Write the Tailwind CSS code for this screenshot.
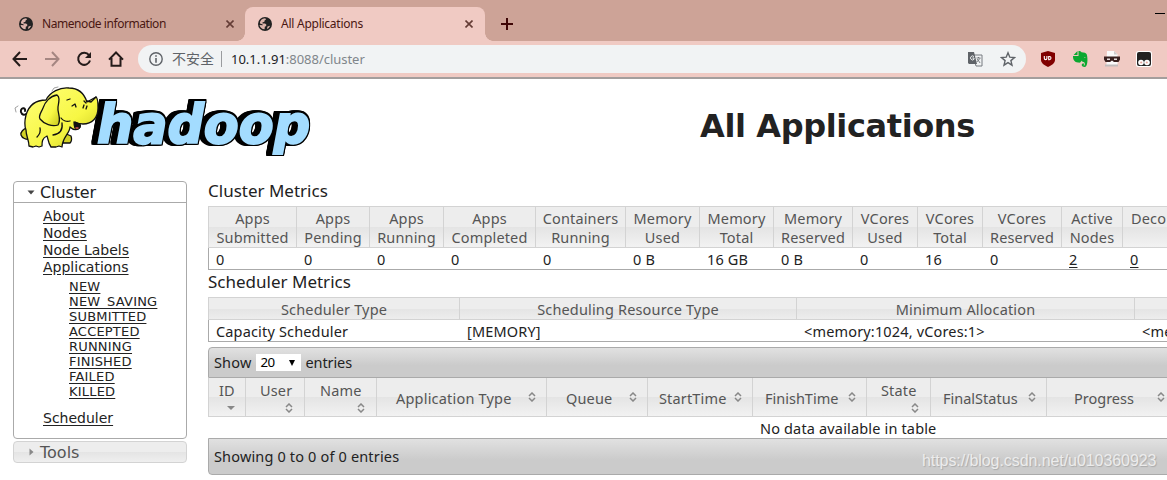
<!DOCTYPE html>
<html lang="zh">
<head>
<meta charset="utf-8">
<title>All Applications</title>
<script src="https://cdn.jsdelivr.net/npm/@tailwindcss/browser@4"></script>
</head>
<body class="w-[1167px] h-[480px] overflow-hidden bg-white font-['Noto_Sans','Noto_Sans_CJK_SC',sans-serif] text-[#222]">
<svg class="hidden">
  <symbol id="globe" viewBox="0 0 14 14"><circle cx="7" cy="7" r="7" fill="#222"/><path d="M7.2 1.2 8 2.6 6.6 3.5 6.4 4.8 4.4 5.6 4.6 6.5 7 6.4 8.3 7.6 8.2 9 6.8 9.8 6.6 12.3C4 12.3 2 10.5 1.5 8L4.8 8.2 4.4 7.2 2 6.6C1.8 3.6 4 1.3 7.2 1.2Z" fill="#dcb4ab"/><path d="M9.5 9.5 12 8.8C11.6 10.4 10.4 11.6 9 12Z" fill="#dcb4ab"/></symbol>
  <symbol id="close" viewBox="0 0 8 8"><path d="M.5.5l7 7M7.5.5l-7 7" stroke="#643c35" stroke-width="1.6"/></symbol>
  <symbol id="sort" viewBox="0 0 8 10"><path d="M1 4 4 1 7 4M1 6 4 9 7 6" fill="none" stroke="#888" stroke-width="1.5"/></symbol>
</svg>

<!-- Tab strip -->
<div class="flex h-[41px] bg-[#cda397] text-[12px] text-[#4a1712]">
  <div class="flex w-[245px] h-[41px] pt-[7px] pl-[19px]">
    <div class="flex items-center w-full h-[34px]"><svg class="w-[14px] h-[14px]"><use href="#globe"/></svg><span class="ml-[9px] w-[184px] whitespace-nowrap tracking-[-0.44px]">Namenode information</span><svg class="w-2 h-2"><use href="#close"/></svg></div>
  </div>
  <div class="relative flex items-center w-[240px] h-[34px] mt-[7px] pl-[13px] bg-[#f0cac3] rounded-t-[8px]">
    <div class="absolute -left-2 bottom-0 size-2 bg-[radial-gradient(circle_at_0_0,#cda397_7.5px,#f0cac3_8px)]"></div>
    <div class="absolute -right-2 bottom-0 size-2 bg-[radial-gradient(circle_at_100%_0,#cda397_7.5px,#f0cac3_8px)]"></div>
    <svg class="w-[14px] h-[14px]"><use href="#globe"/></svg><span class="ml-[9px] w-[184px] whitespace-nowrap tracking-[-0.25px]">All Applications</span><svg class="w-2 h-2"><use href="#close"/></svg>
  </div>
  <svg class="ml-4 mt-[18px] w-3 h-3" viewBox="0 0 12 12"><path d="M6 0v12M0 6h12" stroke="#3e0505" stroke-width="2"/></svg>
  <div class="ml-auto mr-[2px] mt-[13px] w-[10px] h-px bg-black"></div>
</div>

<!-- Toolbar -->
<div class="flex items-center h-[38px] bg-[#f0cac3] border-b-2 border-[#a49e9d]">
  <svg class="ml-[12px] w-4 h-4" viewBox="0 0 16 16" fill="none" stroke="#241b1a" stroke-width="2"><path d="M8 1 1.500 8 8 15M1.500 8H15"/></svg>
  <svg class="ml-4 w-4 h-4" viewBox="0 0 16 16" fill="none" stroke="#a58682" stroke-width="2"><path d="M8 1 14.500 8 8 15M14.500 8H1"/></svg>
  <svg class="ml-4 w-4 h-4" viewBox="0 0 16 16"><path d="M13 4.200A6 6 0 1 0 14 9.500" fill="none" stroke="#241b1a" stroke-width="2"/><path d="M15 1v6H9Z" fill="#241b1a"/></svg>
  <svg class="ml-4 w-4 h-4" viewBox="0 0 16 16"><path d="M1 8.600 8 1.500l7 7.100M3.500 7v7.800h9V7" fill="none" stroke="#241b1a" stroke-width="2"/></svg>
  <div class="flex items-center ml-[14px] w-[888px] h-7 rounded-full bg-[#f1f3f4] pl-[11px] pr-[10px]">
    <svg class="w-[14px] h-[14px]" viewBox="0 0 14 14"><circle cx="7" cy="7" r="6.200" fill="none" stroke="#5f6368" stroke-width="1.400"/><path d="M7 3.200v1.600M7 6v4.800" stroke="#5f6368" stroke-width="1.600"/></svg>
    <span class="ml-[9px] w-[49px] text-[14px] leading-7 text-[#5f6368] whitespace-nowrap">不安全</span>
    <span class="w-px h-4 bg-[#9a9c9f]"></span>
    <span class="ml-[9px] text-[13px] tracking-[-0.03px] leading-7 text-[#80868b] whitespace-nowrap"><span class="text-[#202124]">10.1.1.91</span>:8088/cluster</span>
    <svg class="ml-auto w-[15px] h-[15px]" viewBox="0 0 15 15"><path d="M5 3h9v11H8z" fill="#f1f3f4" stroke="#777b80"/><path d="M0 0h6l3 12H1L0 11Z" fill="#5f6368"/><path d="M6 4.600A2 2 0 1 0 6 7.300V6H4.300" fill="none" stroke="#f1f3f4"/><path d="M8.500 6h4M10.500 5v1M12 6.400 8.800 10M9.300 7l2.800 4" fill="none" stroke="#6a6e73" stroke-width=".9"/></svg>
    <svg class="ml-[17px] w-4 h-4" viewBox="0 0 16 16"><path d="m8 1.800 1.800 4.400 4.600.4-3.500 3 1.100 4.600L8 11.700l-4 2.500 1.100-4.600-3.500-3 4.600-.4Z" fill="none" stroke="#5f6368" stroke-width="1.400"/></svg>
  </div>
  <svg class="ml-[15px] w-[14px] h-4" viewBox="0 0 14 16"><path d="M7 0 14 2v7c0 3-3 5-7 7C3 14 0 12 0 9V2Z" fill="#800000"/><path d="M3.300 5v2.300a1.300 1.300 0 0 0 2.600 0V5M7.700 5.500h.7a1.600 1.600 0 0 1 0 3.200h-.7Z" fill="none" stroke="#fff" stroke-width="1.100"/></svg>
  <svg class="ml-[18px] w-[15px] h-4" viewBox="0 0 15 16"><path d="M4.500 0v4H.6ZM5.500 0C7 0 8 .5 8.500 1.300 11 1.500 13.300 1.800 13.800 3.500 15 8 14.800 16 11.500 16 8.500 16 8 13.300 9.800 12.600L11.300 12.600V13.800C10.300 13.600 10.200 14.500 11.200 14.500 12.500 14.500 12.300 11.500 10.500 11 9.500 10.800 8.700 10.500 8.300 9.500 7.800 11.500 7 12 5 11.600 1.500 11 0 9 0 5h5.500Z" fill="#0ba830"/><path d="M10.800 6.800q1-1.400 2 .2Z" fill="#f0cac3"/></svg>
  <svg class="ml-[16px] w-4 h-4" viewBox="0 0 16 16"><path d="M3 0h7l3.500 3.500V14H2.500Z" fill="#fafafa"/><path d="M10 0v3.500h3.500Z" fill="#ccc"/><path d="M1 13.500h13v2H1Z" fill="#c0bcbc"/><path d="M0 5.500h16v3L14.500 11H10L8 9.500 6 11H1.500L0 8.500Z" fill="#39201f"/><path d="M3 8.300h3M10 8.300h3" stroke="#e5dcdc" stroke-width="1.400"/></svg>
  <svg class="ml-4 w-4 h-4" viewBox="0 0 16 16"><rect width="16" height="16" rx="2.500" fill="#fff"/><rect x="1" y="1" width="14" height="14" rx="2" fill="#222"/><circle cx="5" cy="11.500" r="2.800" fill="#fff"/><circle cx="11" cy="11.500" r="2.800" fill="#fff"/><circle cx="5.200" cy="11.500" r="1.100" fill="#e7a79e"/><circle cx="10.800" cy="11.500" r="1.100" fill="#e7a79e"/></svg>
</div>

<!-- Page banner -->
<header class="flex h-[102px]">
  <svg class="w-[330px] h-[90px] -mt-px shrink-0" viewBox="0 0 330 90">
    <defs><linearGradient id="skin" x1="0" y1="0" x2="1" y2="1"><stop offset="0" stop-color="#ffff7a"/><stop offset=".6" stop-color="#f7f744"/><stop offset="1" stop-color="#c5c51c"/></linearGradient></defs>
    <text x="97" y="65" font-family="DejaVu Sans" font-weight="bold" font-style="italic" font-size="53" textLength="213" lengthAdjust="spacingAndGlyphs" fill="#a3dcff" stroke="#a3dcff" stroke-width="2" stroke-linejoin="miter" class="[filter:drop-shadow(1.5px_0_0_#000)_drop-shadow(-1.5px_0_0_#000)_drop-shadow(0_1.5px_0_#000)_drop-shadow(0_-1.5px_0_#000)_drop-shadow(-4px_0_0_#000)]">hadoop</text>
    <g stroke="#111" stroke-width="1.300" stroke-linejoin="round" stroke-linecap="round">
      <path d="M26 36c-3 2-6-1-5-4s5-2 4 1" fill="none" stroke-width="2"/>
      <path d="M26 50c-2 1-6 4-5 7s5 5 9 4ZM64 55l7 3c1 3 0 6-1 7h-7Z" fill="#d2d226"/>
      <path d="M26 37C29 27 36 22 46 22 50 14 60 9 69 10 78 10 84 15 87 24L96 19C98 20 98 25 98 30 98 40 92 46 83 46 79 46 77 45 75 44L80 49C78 53 73 52 70 49 70 55 62 60 62 69L59 68 56 69 51 69C48 65 48 60 47 58 42 60 42 64 42 68L39 69 36 68 33 69 29 68C29 62 26 58 26 52 24 47 25 41 26 37Z" fill="url(#skin)"/>
      <path d="M57 17C50 18 45 24 43 30 41 35 38 38 40 41 44 46 52 49 58 47 62 41 57 35 58 29 59 23 60 19 57 17Z" fill="url(#skin)"/>
      <path d="M74 44C74 47 74 51 77 51 80 51 81 48 80 46Z" fill="#111"/><path d="M76 50h2" stroke="#d55"/>
      <path d="M72 28l3-2 1 3M67 22l3-1M83 30l1-3M86 31l1-3M86 25l-2-2M96 19l-5 5-4-1M61 40c2 3 6 4 9 3M62 45c1 7-2 11-9 12M40 50c1 4-1 7-3 9" fill="none"/>
      <path d="M52 13l2-3 4-1M16 34l-1-4 3-2" fill="none" stroke="#888" stroke-width=".8"/>
    </g>
  </svg>
  <h1 class="ml-[370px] mt-[27px] leading-[40px] text-[32px] tracking-[-0.38px] font-bold font-['DejaVu_Sans',sans-serif] whitespace-nowrap">All Applications</h1>
</header>

<main class="flex items-start w-[1167px] overflow-hidden pl-[13px]">
  <!-- Navigation -->
  <nav class="w-[174px] shrink-0 font-['DejaVu_Sans',sans-serif]">
    <div class="h-[258px] border border-[#aaa] rounded-[4px]">
      <div class="flex items-center h-[21px] border-b border-[#aaa] pl-[13px] text-[16px] tracking-[-0.1px] leading-[20px]"><svg class="w-2 h-[5px]" viewBox="0 0 8 5"><path d="M.5.500h7L4 4.500Z" fill="#444"/></svg><span class="ml-[5px] pt-px">Cluster</span></div>
      <div class="pt-[5px] pl-[29px] text-[14px] tracking-[0] leading-[17px] underline underline-offset-2">
        <div>About</div><div>Nodes</div><div>Node Labels</div><div>Applications</div>
        <div class="pt-[3px] pl-[26px] text-[13px] tracking-[0.2px] leading-[15px]"><div>NEW</div><div>NEW_SAVING</div><div>SUBMITTED</div><div>ACCEPTED</div><div>RUNNING</div><div>FINISHED</div><div>FAILED</div><div>KILLED</div></div>
        <div class="mt-[11px]">Scheduler</div>
      </div>
    </div>
    <div class="mt-[2px] flex items-center h-[22px] border border-[#d3d3d3] rounded-[4px] pl-[15px] text-[16px] text-[#555] bg-[linear-gradient(#ededed_50%,#e4e4e4_50%,#efefef)]"><svg class="w-[5px] h-2" viewBox="0 0 5 8"><path d="M.5.500v7L4.500 4Z" fill="#888"/></svg><span class="ml-[6px] pt-px">Tools</span></div>
  </nav>

  <section class="ml-[21px] w-[959px] overflow-hidden shrink-0 text-[14.500px] tracking-[0.16px] whitespace-nowrap">
    <h2 class="h-[25px] leading-[20px] text-[17px] tracking-[0]">Cluster Metrics</h2>
    <div class="grid grid-cols-[88px_73px_74px_92px_90px_74px_74px_79px_65px_65px_79px_61px_200px] h-[42px] border-y border-[#d3d3d3] bg-[linear-gradient(#ededed_50%,#e4e4e4_50%,#f2f2f2)] text-center leading-[19px] pt-0 text-[#555] *:border-l *:border-[#d3d3d3] *:pt-[2px]">
      <div>Apps<br>Submitted</div><div>Apps<br>Pending</div><div>Apps<br>Running</div><div>Apps<br>Completed</div><div>Containers<br>Running</div><div>Memory<br>Used</div><div>Memory<br>Total</div><div>Memory<br>Reserved</div><div>VCores<br>Used</div><div>VCores<br>Total</div><div>VCores<br>Reserved</div><div>Active<br>Nodes</div><div class="text-left pl-[8px]">Deco</div>
    </div>
    <div class="grid grid-cols-[88px_73px_74px_92px_90px_74px_74px_79px_65px_65px_79px_61px_200px] h-[22px] border-b border-l border-[#aaa] leading-[22px] *:pl-[7px]">
      <div>0</div><div>0</div><div>0</div><div>0</div><div>0</div><div>0 B</div><div>16 GB</div><div>0 B</div><div>0</div><div>16</div><div>0</div><div class="underline underline-offset-2">2</div><div class="underline underline-offset-2">0</div>
    </div>
    <h2 class="h-[27px] leading-[24px] text-[17px] tracking-[0]">Scheduler Metrics</h2>
    <div class="grid grid-cols-[251px_337px_338px_338px] h-[23px] border-y border-[#d3d3d3] bg-[linear-gradient(#ededed_50%,#e4e4e4_50%,#ededed)] text-center leading-[23px] text-[#555] *:border-l *:border-[#d3d3d3] *:h-[21px]">
      <div>Scheduler Type</div><div>Scheduling Resource Type</div><div>Minimum Allocation</div><div></div>
    </div>
    <div class="grid grid-cols-[251px_337px_338px_338px] h-[22px] border-b border-l border-[#aaa] leading-[22px] *:pl-[7px]">
      <div>Capacity Scheduler</div><div>[MEMORY]</div><div>&lt;memory:1024, vCores:1&gt;</div><div>&lt;memory:8192, vCores:4&gt;</div>
    </div>
    <div class="mt-[5px] flex items-center w-[1200px] h-[31px] border border-[#aaa] rounded-tl-[4px] bg-[linear-gradient(#e1e1e1,#cbcbcb_60%,#cbcbcb)] pl-[5px]">
      <span>Show</span>
      <div class="ml-[5px] flex items-center w-[45px] h-[17px] bg-white pl-[4px] text-[13.300px] text-black"><span class="w-[29px] tracking-[-0.5px]">20</span><svg class="w-[6px] h-[6px]" viewBox="0 0 6 6"><path d="M0 0h6L3 6Z"/></svg></div>
      <span class="ml-[4px] tracking-[-0.1px]">entries</span>
    </div>
    <div class="grid grid-cols-[37px_59px_72px_170px_101px_105px_114px_64px_116px_360px] h-[39px] border-b border-[#d3d3d3] bg-[linear-gradient(#ededed_50%,#e4e4e4_50%,#f2f2f2)] text-[#555] leading-[19px] *:border-l *:border-[#d3d3d3]">
      <div class="pt-[3px] pl-[10px]">ID<svg class="ml-[8px] mt-[6px] w-[8px] h-[4px]" viewBox="0 0 8 4"><path d="M0 0h8L4 4Z" fill="#888"/></svg></div>
      <div class="pt-[3px] pl-[14px]">User<svg class="ml-[25px] w-2 h-[10px] mt-[3px]"><use href="#sort"/></svg></div>
      <div class="pt-[3px] pl-[15px]">Name<svg class="ml-[37px] w-2 h-[10px] mt-[3px]"><use href="#sort"/></svg></div>
      <div class="flex items-center pl-[19px] pt-[3px] tracking-[0.2px]">Application Type<svg class="ml-auto mr-[10px] -mt-1 w-2 h-[10px]"><use href="#sort"/></svg></div>
      <div class="flex items-center pl-[19px] pt-[3px]">Queue<svg class="ml-auto mr-[10px] -mt-1 w-2 h-[10px]"><use href="#sort"/></svg></div>
      <div class="flex items-center pl-[11px] pt-[3px]">StartTime<svg class="ml-auto mr-[10px] -mt-1 w-2 h-[10px]"><use href="#sort"/></svg></div>
      <div class="flex items-center pl-[12px] pt-[3px] tracking-[0]">FinishTime<svg class="ml-auto mr-[10px] -mt-1 w-2 h-[10px]"><use href="#sort"/></svg></div>
      <div class="pt-[3px] pl-[14px]">State<svg class="ml-[30px] w-2 h-[10px] mt-[3px]"><use href="#sort"/></svg></div>
      <div class="flex items-center pl-[12px] pt-[3px] tracking-[0]">FinalStatus<svg class="ml-auto mr-[10px] -mt-1 w-2 h-[10px]"><use href="#sort"/></svg></div>
      <div class="flex items-center pl-[27px] pt-[3px] tracking-[0]"><span class="w-[83px]">Progress</span><svg class="-mt-1 w-2 h-[10px]"><use href="#sort"/></svg></div>
    </div>
    <div class="h-[21px] pl-[552px] leading-[23px]">No data available in table</div>
    <div class="relative flex items-center w-[1200px] h-[37px] border border-[#aaa] rounded-bl-[4px] bg-[linear-gradient(#e1e1e1,#cbcbcb_60%,#cbcbcb)] pl-[5px]">Showing 0 to 0 of 0 entries
      <span class="absolute left-[713px] top-[12px] leading-[20px] text-[16px] tracking-[-0.07px] font-['Liberation_Sans',sans-serif] text-[#ececec] [text-shadow:1px_1px_1px_#aaa]">https://blog.csdn.net/u010360923</span>
    </div>
  </section>
</main>
</body>
</html>
